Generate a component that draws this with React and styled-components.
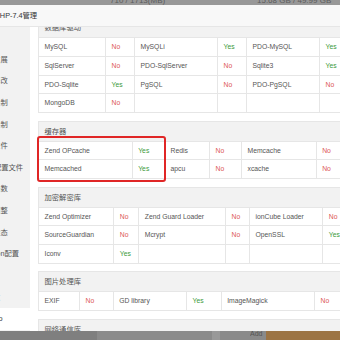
import React from 'react';
import styled, { createGlobalStyle } from 'styled-components';

const GlobalStyle = createGlobalStyle`
  html, body {
    margin: 0;
    padding: 0;
    background: #868686;
  }
  body {
    font-family: "Liberation Sans", "Noto Sans CJK SC", sans-serif;
  }
`;

const Page = styled.div`
  width: 340px;
  height: 340px;
  overflow: hidden;
  display: flex;
  flex-direction: column;
  background: #868686;
`;

const TopStrip = styled.div`
  flex: none;
  height: 5px;
  overflow: hidden;
  background: #989898;
  display: grid;
  grid-template-columns: 147px auto;
  padding-left: 110px;
`;

const StatText = styled.span`
  font-size: 8px;
  line-height: 8px;
  margin-top: -3.5px;
  color: #5c5c5c;
  white-space: nowrap;
`;

const Modal = styled.div`
  flex: none;
  width: 440px;
  height: 326px;
  margin-left: -40px;
  background: #fff;
  display: flex;
  flex-direction: column;
  overflow: hidden;
`;

const ModalHeader = styled.div`
  flex: none;
  height: 22px;
  box-sizing: border-box;
  padding-left: 35px;
  background: #f8f8f8;
  border-bottom: 1px solid #e6e6e6;
  font-size: 7.3px;
  line-height: 21px;
  color: #333;
  white-space: nowrap;
`;

const ModalBody = styled.div`
  flex: 1;
  display: flex;
  min-height: 0;
`;

const Sidebar = styled.div`
  flex: none;
  width: 70px;
  background: #f2f2f2;
  display: flex;
  flex-direction: column;
`;

const SideItem = styled.div`
  height: 21.65px;
  line-height: 21.65px;
  padding-left: 18.5px;
  font-size: 7.3px;
  color: ${p => (p.$active ? '#333' : '#555')};
  background: ${p => (p.$active ? '#fff' : 'transparent')};
  white-space: nowrap;
`;

const Content = styled.div`
  flex: 1;
  padding-left: 8px;
  overflow: hidden;
`;

const Scroller = styled.div`
  margin-top: -9.8px;
  display: flex;
  flex-direction: column;
  gap: 7.5px;
`;

const Card = styled.div`
  position: relative;
  width: 340px;
`;

const CardTitle = styled.div`
  height: 20px;
  box-sizing: border-box;
  padding-left: 5.5px;
  background: #f2f2f2;
  border: 1px solid #e6e6e6;
  border-bottom: none;
  font-size: 7.3px;
  line-height: 19px;
  color: #555;
`;

const Table = styled.table`
  width: 100%;
  table-layout: fixed;
  border-collapse: collapse;
`;

const Row = styled.tr`
  height: 18.75px;
`;

const Cell = styled.td`
  padding: 0 0 0 5.5px;
  border: 1px solid #e6e6e6;
  font-size: 6.8px;
  line-height: 8px;
  color: ${p => (p.$status === 'Yes' ? '#3c9b3c' : p.$status === 'No' ? '#dc5656' : '#555')};
  white-space: nowrap;
  overflow: hidden;
`;

const Highlight = styled.div`
  position: absolute;
  left: -1px;
  top: 15px;
  width: 129px;
  height: 46px;
  box-sizing: border-box;
  border: 2px solid #e02626;
  border-radius: 3px;
  pointer-events: none;
`;

const BottomStrip = styled.div`
  flex: 1;
  display: grid;
  grid-template-columns: 97px 115px 8px 30px 16px 1fr;
  background: #838383;
`;

const Segment = styled.div`
  background: ${p => p.$bg};
  font-size: 7px;
  line-height: 6px;
  color: #555;
  overflow: hidden;
`;

const sideItems = [
  '服务', '安装扩展', '配置修改', '上传限制', '超时限制', '配置文件',
  'FPM配置文件', '禁用函数', '性能调整', '负载状态', 'Session配置',
  '日志', '慢日志', 'phpinfo'
];

const sections = [
  {
    title: '数据库驱动',
    cols: [67, 29, 83, 29, 73],
    rows: [
      ['MySQL', 'No', 'MySQLi', 'Yes', 'PDO-MySQL', 'Yes'],
      ['SqlServer', 'No', 'PDO-SqlServer', 'No', 'Sqlite3', 'Yes'],
      ['PDO-Sqlite', 'Yes', 'PgSQL', 'No', 'PDO-PgSQL', 'No'],
      ['MongoDB', 'No', '', '', '', '']
    ]
  },
  {
    title: '缓存器',
    cols: [93.7, 32.3, 45, 32, 74.7],
    highlight: true,
    rows: [
      ['Zend OPcache', 'Yes', 'Redis', 'No', 'Memcache', 'No'],
      ['Memcached', 'Yes', 'apcu', 'No', 'xcache', 'No']
    ]
  },
  {
    title: '加密解密库',
    cols: [75.3, 25, 86.7, 24, 73.3],
    rows: [
      ['Zend Optimizer', 'No', 'Zend Guard Loader', 'No', 'ionCube Loader', 'No'],
      ['SourceGuardian', 'No', 'Mcrypt', 'No', 'OpenSSL', 'Yes'],
      ['Iconv', 'Yes', '', '', '', '']
    ]
  },
  {
    title: '图片处理库',
    cols: [41, 33.7, 73.3, 34.7, 93.3],
    rows: [
      ['EXIF', 'No', 'GD library', 'Yes', 'ImageMagick', 'No']
    ]
  },
  {
    title: '网络通信库',
    cols: [60, 30, 80, 30, 80],
    rows: [
      ['cURL', 'Yes', 'Swoole', 'No', 'Sockets', 'No']
    ]
  }
];

const Section = ({ title, cols, rows, highlight }) => (
  <Card>
    <CardTitle>{title}</CardTitle>
    <Table>
      <colgroup>
        {cols.map((w, i) => (
          <col key={i} style={{ width: w }} />
        ))}
        <col />
      </colgroup>
      <tbody>
        {rows.map((row, r) => (
          <Row key={r}>
            {row.map((text, c) => (
              <Cell key={c} $status={c % 2 === 1 ? text : undefined}>
                {text}
              </Cell>
            ))}
          </Row>
        ))}
      </tbody>
    </Table>
    {highlight && <Highlight />}
  </Card>
);

const App = () => (
  <Page>
    <GlobalStyle />
    <TopStrip>
      <StatText>710 / 1713(MB)</StatText>
      <StatText>15.68 GB / 49.99 GB</StatText>
    </TopStrip>
    <Modal>
      <ModalHeader>PHP-7.4管理</ModalHeader>
      <ModalBody>
        <Sidebar>
          {sideItems.map(item => (
            <SideItem key={item} $active={item === 'phpinfo'}>
              {item}
            </SideItem>
          ))}
        </Sidebar>
        <Content>
          <Scroller>
            {sections.map(s => (
              <Section key={s.title} {...s} />
            ))}
          </Scroller>
        </Content>
      </ModalBody>
    </Modal>
    <BottomStrip>
      <Segment $bg="#7f7f7f" />
      <Segment $bg="#8b8b8b" />
      <Segment $bg="#999" />
      <Segment $bg="#8a8a8a" />
      <Segment $bg="#8a8a8a">Add</Segment>
      <Segment $bg="#9c7444" />
    </BottomStrip>
  </Page>
);

export default App;
